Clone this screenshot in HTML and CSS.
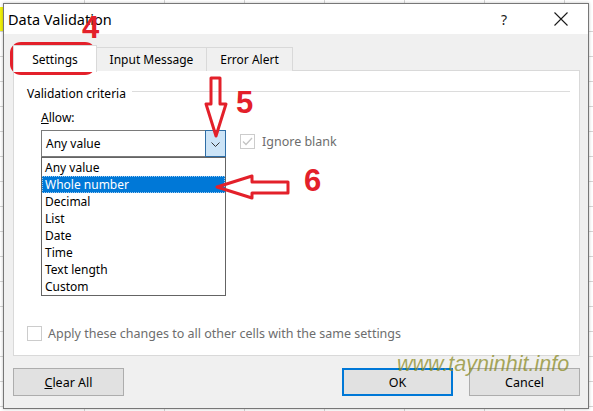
FILE: index.html
```html
<!DOCTYPE html>
<html>
<head>
<meta charset="utf-8">
<link rel="stylesheet" href="styles.css">
</head>
<body>
<div class="page">
  <div class="dialog">
    <div class="titlebar">
      <span class="title">Data Validation</span>
      <span class="help">?</span>
      <svg class="close" width="14" height="14" viewBox="0 0 14 14"><path d="M0.5 0.5 L13.5 13.5 M13.5 0.5 L0.5 13.5" stroke="#1a1a1a" stroke-width="1.1" fill="none"/></svg>
    </div>
    <div class="body">
      <div class="tabs">
        <div class="tab active">Settings</div>
        <div class="tab tab-input">Input Message</div>
        <div class="tab tab-error">Error Alert</div>
      </div>
      <div class="panel">
        <div class="group">
          <span class="group-label">Validation criteria</span>
          <span class="group-line"></span>
        </div>
        <div class="allow-label"><u>A</u>llow:</div>
        <div class="combo-row">
          <div class="combo-wrap">
            <div class="combo">
              <span class="combo-text">Any value</span>
              <span class="combo-btn"><svg width="9" height="6" viewBox="0 0 9 6"><path d="M0.5 0.5 L4.5 4.5 L8.5 0.5" stroke="#333" stroke-width="1" fill="none"/></svg></span>
            </div>
            <ul class="list">
              <li>Any value</li>
              <li class="selected">Whole number</li>
              <li>Decimal</li>
              <li>List</li>
              <li>Date</li>
              <li>Time</li>
              <li>Text length</li>
              <li>Custom</li>
            </ul>
          </div>
          <label class="check disabled ignore">
            <span class="box checked"><svg width="13" height="13" viewBox="0 0 13 13"><path d="M2 6.5 L5 9.5 L11 3" stroke="#c4c4c4" stroke-width="1.3" fill="none"/></svg></span>
            <span>Ignore blank</span>
          </label>
        </div>
        <label class="check disabled apply">
          <span class="box"></span>
          <span>Apply these changes to all other cells with the same settings</span>
        </label>
      </div>
      <div class="buttons">
        <button class="btn"><u>C</u>lear All</button>
        <span class="spacer"></span>
        <button class="btn default">OK</button>
        <button class="btn">Cancel</button>
      </div>
    </div>
  </div>

  <div class="ann-rect"></div>
  <span class="ann-num n4">4</span>
  <span class="ann-num n5">5</span>
  <span class="ann-num n6">6</span>
  <svg class="ann-arrows" width="593" height="411" viewBox="0 0 593 411">
    <polygon points="211,78 220,78 220,104 226,104 216,136 206,104 211,104" fill="none" stroke="#e3202a" stroke-width="3" stroke-linejoin="round"/>
    <polygon points="217,187 252,176 252,182 288,182 288,193 252,193 252,198" fill="none" stroke="#e3202a" stroke-width="3" stroke-linejoin="round"/>
  </svg>
  <span class="watermark">www.tayninhit.info</span>
</div>
</body>
</html>
```

FILE: styles.css
```css
* { box-sizing: border-box; }
html, body { margin: 0; padding: 0; }
body {
  width: 593px;
  height: 411px;
  overflow: hidden;
  font-family: "Noto Sans", "Open Sans", sans-serif;
  font-size: 12px;
  color: #000;
  background-color: #fff;
  background-image:
    linear-gradient(#f2f20a, #f2f20a),
    repeating-linear-gradient(to bottom, transparent 0, transparent 24px, #d4d4d4 24px, #d4d4d4 25px),
    repeating-linear-gradient(to right, transparent 0, transparent 79px, #d4d4d4 79px, #d4d4d4 80px);
  background-size: 3px 24px, 100% 100%, 100% 100%;
  background-position: 0 7px, 0 7px, 5px 0;
  background-repeat: no-repeat, repeat, repeat;
}
.page {
  position: relative;
  width: 593px;
  height: 411px;
  padding: 3px 0 0 3px;
}
.dialog {
  width: 586px;
  height: 406px;
  border: 1px solid #777;
  background: #f0f0f0;
  display: flex;
  flex-direction: column;
  box-shadow: 0 0 3px rgba(0,0,0,0.25);
}
.titlebar {
  height: 30px;
  background: #fff;
  display: flex;
  align-items: center;
  padding-left: 4px;
  flex: none;
}
.title {
  font-size: 14.5px;
  color: #000;
  flex: 1;
}
.help {
  font-size: 14px;
  color: #1a1a1a;
  margin-right: 47px;
}
.close { margin-right: 20px; }
.body {
  flex: 1;
  display: flex;
  flex-direction: column;
  padding: 10px 8px 11px 9px;
}
.tabs {
  display: flex;
  align-items: flex-end;
  height: 27px;
  position: relative;
  z-index: 1;
}
.tab {
  height: 24px;
  border: 1px solid #d9d9d9;
  border-bottom: none;
  background: #f0f0f0;
  display: flex;
  align-items: center;
  justify-content: center;
  font-size: 12px;
  margin-bottom: 0;
}
.tab.active {
  height: 27px;
  width: 84px;
  background: #fff;
  margin-bottom: -1px;
  padding-top: 1px;
}
.tab-input { width: 110px; border-left: none; }
.tab-error { width: 86px; border-left: none; }
.panel {
  height: 286px;
  background: #fff;
  border: 1px solid #d9d9d9;
  display: flex;
  flex-direction: column;
  padding: 13px 9px 13px 13px;
  margin-top: -1px;
}
.group {
  display: flex;
  align-items: center;
  height: 18px;
}
.group-label { white-space: nowrap; margin-right: 6px; }
.group-line {
  flex: 1;
  height: 1px;
  background: #dcdcdc;
  margin-top: -3px;
}
.allow-label {
  margin-left: 14px;
  margin-top: 7px;
  height: 18px;
  line-height: 18px;
}
.combo-row {
  display: flex;
  align-items: flex-start;
  margin-top: 3px;
  margin-left: 14px;
}
.combo-wrap {
  position: relative;
  width: 185px;
}
.combo {
  height: 27px;
  border: 1px solid #7a7a7a;
  display: flex;
  background: #fff;
}
.combo-text {
  flex: 1;
  padding-left: 4px;
  line-height: 25px;
}
.combo-btn {
  width: 21px;
  margin: -1px -1px -1px 0;
  border: 1px solid #2f6ea6;
  background: #cce4f7;
  display: flex;
  align-items: center;
  justify-content: center;
  padding-top: 2px;
}
.list {
  position: absolute;
  left: 0;
  top: 27px;
  width: 185px;
  margin: 0;
  padding: 1px 0 0 0;
  list-style: none;
  background: #fff;
  border: 1px solid #646464;
  height: 139px;
}
.list li {
  height: 17px;
  line-height: 17px;
  padding-left: 3px;
}
.list li.selected {
  background: #0078d7;
  color: #fff;
  outline: 1px dotted #9ecbf0;
  outline-offset: -1px;
}
.check {
  display: flex;
  align-items: center;
}
.check.disabled { color: #6d6d6d; }
.box {
  width: 15px;
  height: 15px;
  border: 1px solid #cccccc;
  background: #fff;
  display: flex;
  align-items: center;
  justify-content: center;
  margin-right: 7px;
}
.ignore {
  margin-left: 14px;
  margin-top: 3px;
  font-size: 12.5px;
}
.apply {
  margin-top: auto;
  font-size: 12.5px;
  margin-left: 0;
}
.apply .box { margin-right: 6px; }
.buttons {
  display: flex;
  margin-top: 12px;
  height: 28px;
}
.spacer { flex: 1; }
.btn {
  width: 111px;
  height: 28px;
  border: 1px solid #adadad;
  background: #e1e1e1;
  font-family: "Noto Sans", "Open Sans", sans-serif;
  font-size: 12.5px;
  color: #000;
  padding: 0;
}
.btn.default {
  border: 2px solid #0078d7;
  margin-right: 16px;
}
.ann-rect {
  position: absolute;
  left: 10px;
  top: 42px;
  width: 86px;
  height: 33px;
  border: 4px solid #e3202a;
  border-radius: 11px;
}
.ann-num {
  position: absolute;
  font-family: "Liberation Sans", Arial, sans-serif;
  font-weight: bold;
  font-size: 31px;
  line-height: 1;
  color: #e3202a;
}
.n4 { left: 82px; top: 12px; }
.n5 { left: 236px; top: 87px; }
.n6 { left: 304px; top: 165px; }
.ann-arrows {
  position: absolute;
  left: 0;
  top: 0;
  pointer-events: none;
}
.watermark {
  position: absolute;
  left: 397px;
  top: 352px;
  font-family: "Liberation Sans", Arial, sans-serif;
  font-style: italic;
  font-size: 21.5px;
  color: rgba(140, 140, 40, 0.75);
  white-space: nowrap;
}
```
